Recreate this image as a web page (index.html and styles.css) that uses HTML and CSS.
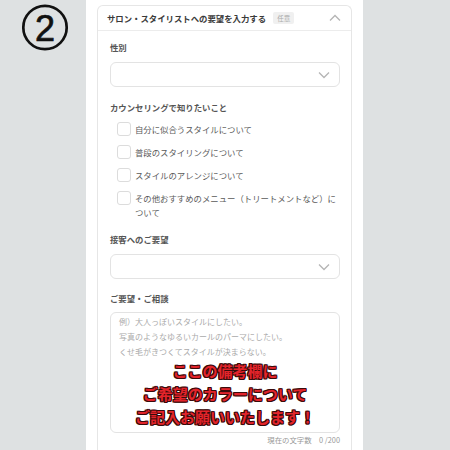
FILE: index.html
```html
<!DOCTYPE html>
<html lang="ja">
<head>
<meta charset="utf-8">
<link rel="stylesheet" href="styles.css">
</head>
<body>
<div class="page">
  <div class="side">
    <svg class="num" width="50" height="50" viewBox="0 0 50 50">
      <circle cx="25" cy="24.5" r="21.7" fill="none" stroke="#111" stroke-width="2.7"/>
      <text x="25" y="37.5" text-anchor="middle" class="num-text">2</text>
    </svg>
  </div>
  <div class="panel">
    <div class="card">
      <div class="card-head">
        <span class="head-title">サロン・スタイリストへの要望を入力する</span>
        <span class="badge">任意</span>
        <svg class="chev-up" width="12" height="8" viewBox="0 0 12 8"><path d="M1 6.5 L6 1.5 L11 6.5" fill="none" stroke="#b5b5b5" stroke-width="1.3"/></svg>
      </div>
      <div class="card-body">
        <div class="label">性別</div>
        <div class="select">
          <svg class="chev-down" width="12" height="8" viewBox="0 0 12 8"><path d="M1 1.5 L6 6.5 L11 1.5" fill="none" stroke="#b5b5b5" stroke-width="1.3"/></svg>
        </div>

        <div class="label gap">カウンセリングで知りたいこと</div>
        <div class="checks">
          <div class="check"><span class="box"></span><span class="ctext">自分に似合うスタイルについて</span></div>
          <div class="check"><span class="box"></span><span class="ctext">普段のスタイリングについて</span></div>
          <div class="check"><span class="box"></span><span class="ctext">スタイルのアレンジについて</span></div>
          <div class="check"><span class="box"></span><span class="ctext">その他おすすめのメニュー（トリートメントなど）について</span></div>
        </div>

        <div class="label gap">接客へのご要望</div>
        <div class="select">
          <svg class="chev-down" width="12" height="8" viewBox="0 0 12 8"><path d="M1 1.5 L6 6.5 L11 1.5" fill="none" stroke="#b5b5b5" stroke-width="1.3"/></svg>
        </div>

        <div class="label gap2">ご要望・ご相談</div>
        <div class="textarea">
          <div class="ph">例）大人っぽいスタイルにしたい。<br>写真のようなゆるいカールのパーマにしたい。<br>くせ毛がきつくてスタイルが決まらない。</div>
          <div class="note">ここの備考欄に<br>ご希望のカラーについて<br>ご記入お願いいたします！</div>
        </div>
        <div class="counter">現在の文字数　0 /200</div>
      </div>
    </div>
  </div>
</div>
</body>
</html>
```
FILE: styles.css
```css
* { box-sizing: border-box; }
html, body { margin: 0; padding: 0; }
body {
  width: 450px;
  height: 450px;
  overflow: hidden;
  background: #dee1e2;
  font-family: "Noto Sans CJK JP", "Noto Sans", sans-serif;
  color: #444;
}
.page { display: flex; height: 450px; }
.side {
  width: 86px;
  flex: none;
  display: flex;
  justify-content: center;
  align-items: flex-start;
  padding-top: 3px;
  padding-left: 4px;
}
.num { display: block; }
.num-text {
  font-family: "Liberation Sans", Arial, sans-serif;
  font-size: 36px;
  fill: #111;
  stroke: #111;
  stroke-width: 0.7px;
}
.panel {
  width: 277px;
  flex: none;
  background: #fff;
  padding: 5px 11px 0 11px;
}
.card {
  border: 1px solid #e6e6e6;
  border-bottom: none;
  border-radius: 6px 6px 0 0;
  height: 460px;
}
.card-head {
  height: 25px;
  border-bottom: 1px solid #ececec;
  display: flex;
  align-items: center;
  padding: 0 10px 0 9px;
}
.head-title {
  font-size: 8.4px;
  font-weight: bold;
  color: #3a3a3a;
}
.badge {
  margin-left: 7px;
  background: #f0f0f0;
  color: #aaa;
  font-size: 6.5px;
  padding: 1px 4px;
  line-height: 10px;
  border-radius: 2px;
}
.chev-up { margin-left: auto; }
.card-body { padding: 9px 11px 0 12px; }
.label {
  font-size: 8.4px;
  font-weight: bold;
  color: #555;
  line-height: 14px;
  margin-bottom: 8px;
}
.label.gap { margin-top: 13px; margin-bottom: 8px; }
.label.gap2 { margin-top: 12px; margin-bottom: 7px; }
.select {
  height: 25px;
  border: 1px solid #e3e3e3;
  border-radius: 6px;
  display: flex;
  align-items: center;
  justify-content: flex-end;
  padding-right: 9px;
}
.checks {
  display: flex;
  flex-direction: column;
  gap: 9px;
  padding-left: 7px;
}
.check {
  display: flex;
  align-items: flex-start;
}
.box {
  width: 14px;
  height: 14px;
  flex: none;
  border: 1px solid #dcdcdc;
  border-radius: 3px;
  margin-right: 4px;
}
.ctext {
  font-size: 8.4px;
  line-height: 14px;
  color: #5a5a5a;
}
.textarea {
  height: 121px;
  border: 1px solid #e3e3e3;
  border-radius: 6px;
  padding: 1px 8px 0 8px;
}
.ph {
  font-size: 8px;
  line-height: 15px;
  color: #aaa;
}
.note {
  margin-top: 0;
  text-align: center;
  font-size: 15px;
  line-height: 23px;
  font-weight: bold;
  color: #e3242b;
  text-shadow: -1px -1px 0 #3a0a0a, 1px -1px 0 #3a0a0a, -1px 1px 0 #3a0a0a, 1px 1px 0 #3a0a0a, 0 1px 0 #3a0a0a, 1px 0 0 #3a0a0a, -1px 0 0 #3a0a0a, 0 -1px 0 #3a0a0a;
}
.counter {
  text-align: right;
  font-size: 7.4px;
  color: #999;
  line-height: 14px;
  margin-top: 0;
}
```
